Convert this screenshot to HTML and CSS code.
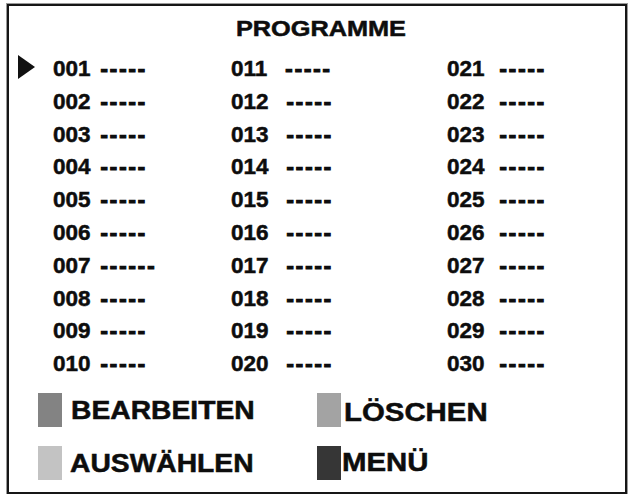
FILE: index.html
```html
<!DOCTYPE html>
<html lang="de">
<head>
<meta charset="utf-8">
<title>Programme</title>
<link rel="stylesheet" href="styles.css">
</head>
<body>
<div class="frame">
  <div class="title"><span class="title-text">PROGRAMME</span></div>
  <div class="list">
    <div class="marker"><svg class="arrow" width="17" height="24" viewBox="0 0 17 24"><polygon points="0,0 17,12 0,24" fill="#111"/></svg></div>
    <div class="cell c1"><span class="num">001</span><span class="dash">-----</span></div>
    <div class="cell c2"><span class="num">011</span><span class="dash">-----</span></div>
    <div class="cell c3"><span class="num">021</span><span class="dash">-----</span></div>

    <div class="marker"></div>
    <div class="cell c1"><span class="num">002</span><span class="dash">-----</span></div>
    <div class="cell c2"><span class="num">012</span><span class="dash">-----</span></div>
    <div class="cell c3"><span class="num">022</span><span class="dash">-----</span></div>

    <div class="marker"></div>
    <div class="cell c1"><span class="num">003</span><span class="dash">-----</span></div>
    <div class="cell c2"><span class="num">013</span><span class="dash">-----</span></div>
    <div class="cell c3"><span class="num">023</span><span class="dash">-----</span></div>

    <div class="marker"></div>
    <div class="cell c1"><span class="num">004</span><span class="dash">-----</span></div>
    <div class="cell c2"><span class="num">014</span><span class="dash">-----</span></div>
    <div class="cell c3"><span class="num">024</span><span class="dash">-----</span></div>

    <div class="marker"></div>
    <div class="cell c1"><span class="num">005</span><span class="dash">-----</span></div>
    <div class="cell c2"><span class="num">015</span><span class="dash">-----</span></div>
    <div class="cell c3"><span class="num">025</span><span class="dash">-----</span></div>

    <div class="marker"></div>
    <div class="cell c1"><span class="num">006</span><span class="dash">-----</span></div>
    <div class="cell c2"><span class="num">016</span><span class="dash">-----</span></div>
    <div class="cell c3"><span class="num">026</span><span class="dash">-----</span></div>

    <div class="marker"></div>
    <div class="cell c1"><span class="num">007</span><span class="dash">------</span></div>
    <div class="cell c2"><span class="num">017</span><span class="dash">-----</span></div>
    <div class="cell c3"><span class="num">027</span><span class="dash">-----</span></div>

    <div class="marker"></div>
    <div class="cell c1"><span class="num">008</span><span class="dash">-----</span></div>
    <div class="cell c2"><span class="num">018</span><span class="dash">-----</span></div>
    <div class="cell c3"><span class="num">028</span><span class="dash">-----</span></div>

    <div class="marker"></div>
    <div class="cell c1"><span class="num">009</span><span class="dash">-----</span></div>
    <div class="cell c2"><span class="num">019</span><span class="dash">-----</span></div>
    <div class="cell c3"><span class="num">029</span><span class="dash">-----</span></div>

    <div class="marker"></div>
    <div class="cell c1"><span class="num">010</span><span class="dash">-----</span></div>
    <div class="cell c2"><span class="num">020</span><span class="dash">-----</span></div>
    <div class="cell c3"><span class="num">030</span><span class="dash">-----</span></div>
  </div>
  <div class="legend">
    <div class="item item-edit"><span class="swatch sw-edit"></span><span class="label">BEARBEITEN</span></div>
    <div class="item item-del"><span class="swatch sw-del"></span><span class="label label-lg">LÖSCHEN</span></div>
    <div class="item item-sel"><span class="swatch sw-sel"></span><span class="label">AUSWÄHLEN</span></div>
    <div class="item item-menu"><span class="swatch sw-menu"></span><span class="label label-lg">MENÜ</span></div>
  </div>
</div>
</body>
</html>
```
FILE: styles.css
```css
html, body {
  margin: 0;
  padding: 0;
  background: #ffffff;
}

body {
  font-family: "Liberation Sans", Arial, sans-serif;
  font-weight: bold;
  color: #0d0d0d;
  -webkit-text-stroke: 0.5px #0d0d0d;
}

.frame {
  box-sizing: border-box;
  width: 620px;
  height: 490px;
  margin: 4px 0 0 7px;
  border: 2px solid #161616;
  box-shadow: 0 0 0 1px #9a9a9a;
  padding-top: 8px;
  background: #ffffff;
}

.title {
  text-align: center;
  font-size: 22px;
  line-height: 30px;
  height: 30px;
  padding-left: 7px;
}

.title-text {
  display: inline-block;
  transform: scaleX(1.15);
  transform-origin: center;
}

.list {
  display: grid;
  grid-template-columns: 44px 178px 216px 1fr;
  grid-auto-rows: 32.8px;
  margin-top: 9px;
  font-size: 22px;
  line-height: 32.8px;
}

.marker {
  display: flex;
  align-items: center;
}

.arrow {
  display: block;
  margin-left: 9px;
  margin-bottom: 4px;
}

.cell {
  display: flex;
  white-space: nowrap;
}

.num {
  font-size: 22.5px;
}

.dash {
  letter-spacing: 2px;
  -webkit-text-stroke: 1.2px #0d0d0d;
}

.c1 .dash { margin-left: 10px; }
.c2 .dash { margin-left: 18px; }
.c3 .dash { margin-left: 15px; }

.legend {
  display: grid;
  grid-template-columns: 279px 1fr;
  grid-auto-rows: 34px;
  row-gap: 19px;
  margin-top: 12px;
  margin-left: 29px;
}

.item {
  display: flex;
  align-items: center;
  white-space: nowrap;
}

.swatch {
  display: block;
  width: 24px;
  height: 34px;
  flex: none;
}

.sw-edit { background: #838383; }
.sw-del  { background: #a3a3a3; }
.sw-sel  { background: #c3c3c3; }
.sw-menu { background: #363636; }

.label {
  display: inline-block;
  font-size: 25px;
  line-height: 34px;
  transform: scaleX(1.13);
  transform-origin: left center;
}

.label-lg {
  font-size: 26px;
}

.item-edit { gap: 9px; }
.item-sel  { gap: 8px; }
.item-del  { gap: 3px; }
.item-menu { gap: 1px; }

.item-del .label { position: relative; top: 2px; }
.item-menu .label { position: relative; top: -1px; }
```
